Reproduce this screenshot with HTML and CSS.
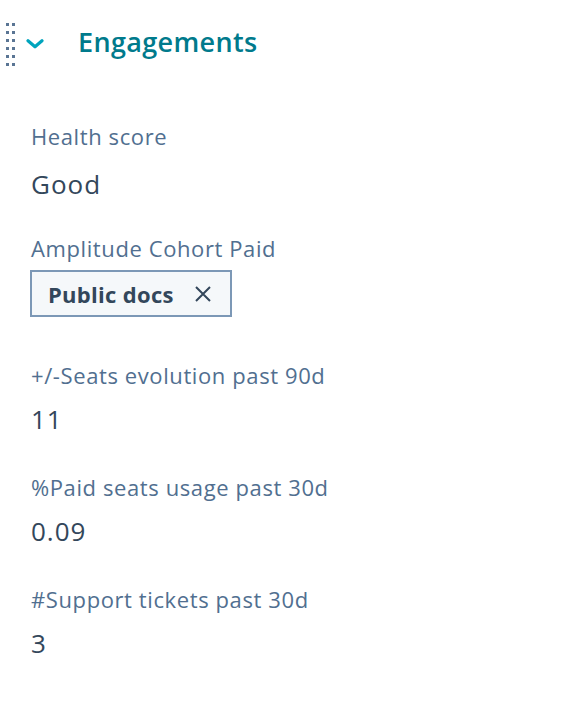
FILE: index.html
```html
<!DOCTYPE html>
<html>
<head>
<meta charset="utf-8">
<link rel="stylesheet" href="styles.css">
</head>
<body>
<section class="card">
  <header class="card-header">
    <span class="handle" aria-hidden="true">
      <span></span><span></span><span></span><span></span><span></span><span></span>
      <span></span><span></span><span></span><span></span><span></span><span></span>
    </span>
    <svg class="chevron" width="18" height="10" viewBox="0 0 18 10" aria-hidden="true">
      <path d="M2 1.8 L9 7.8 L16 1.8" fill="none" stroke="#00a4bd" stroke-width="3.2" stroke-linecap="round" stroke-linejoin="round"/>
    </svg>
    <h2 class="title">Engagements</h2>
  </header>
  <div class="fields">
    <div class="field field--first">
      <div class="label">Health score</div>
      <div class="value">Good</div>
    </div>
    <div class="field">
      <div class="label">Amplitude Cohort Paid</div>
      <div class="chip-row">
        <span class="chip">Public docs
          <svg class="chip-x" width="18" height="18" viewBox="0 0 18 18" aria-hidden="true">
            <path d="M2 2 L16 16 M16 2 L2 16" stroke="#33475b" stroke-width="2" fill="none"/>
          </svg>
        </span>
      </div>
    </div>
    <div class="field">
      <div class="label">+/-Seats evolution past 90d</div>
      <div class="value">11</div>
    </div>
    <div class="field">
      <div class="label">%Paid seats usage past 30d</div>
      <div class="value">0.09</div>
    </div>
    <div class="field">
      <div class="label">#Support tickets past 30d</div>
      <div class="value">3</div>
    </div>
  </div>
</section>
</body>
</html>
```
FILE: styles.css
```css
html, body {
  margin: 0;
  padding: 0;
  background: #ffffff;
}
body {
  font-family: "Open Sans", "Noto Sans", sans-serif;
  color: #33475b;
}
.card {
  padding: 22px 0 0 0;
}
.card-header {
  display: flex;
  align-items: center;
  height: 44px;
}
.handle {
  display: grid;
  grid-template-columns: 3px 3px;
  column-gap: 3px;
  row-gap: 5px;
  margin-left: 6px;
}
.handle span {
  width: 3px;
  height: 3px;
  background: #5a7594;
}
.chevron {
  margin-left: 11px;
  margin-top: 0;
}
.title {
  margin: 0 0 4px 34px;
  font-size: 27px;
  line-height: 32px;
  font-weight: 600;
  color: #007a8c;
  letter-spacing: 0.35px;
}
.fields {
  display: flex;
  flex-direction: column;
  padding: 0 0 0 31px;
  margin-top: 56px;
  gap: 38px;
}
.field {
  display: flex;
  flex-direction: column;
  gap: 14px;
}
.field--first {
  gap: 18px;
  margin-bottom: -4px;
}
.label {
  font-size: 22px;
  line-height: 28px;
  letter-spacing: 0.6px;
  color: #516f90;
}
.value {
  font-size: 26px;
  line-height: 32px;
  letter-spacing: 1px;
  color: #33475b;
}
.chip-row {
  display: flex;
  margin-top: -6px;
  margin-bottom: 6px;
}
.chip {
  display: inline-flex;
  align-items: center;
  box-sizing: border-box;
  height: 47px;
  padding: 0 18px 0 16px;
  border: 2px solid #7c98b6;
  background: #f5f8fa;
  font-size: 22px;
  font-weight: 700;
  letter-spacing: 0.3px;
  color: #33475b;
  margin-left: -1px;
}
.chip-x {
  margin-left: 20px;
}
```
